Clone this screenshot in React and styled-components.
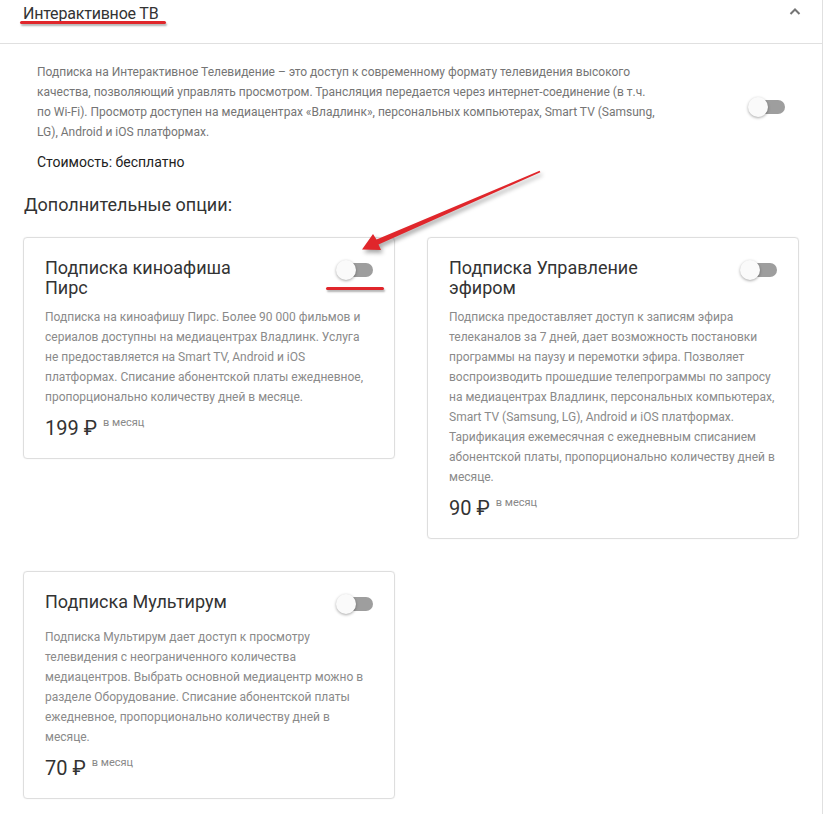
import React from "react";
import styled, { createGlobalStyle } from "styled-components";

const GlobalStyle = createGlobalStyle`
  html, body { margin: 0; padding: 0; background: #fff; }
  body { font-family: Roboto, "Noto Sans", Arial, sans-serif; color: #333; }
  * { box-sizing: border-box; }
`;

const Page = styled.div`
  position: relative;
  width: 823px;
  min-height: 814px;
  border-right: 1px solid #e0e0e0;
`;

const Header = styled.div`
  height: 44px;
  display: flex;
  justify-content: space-between;
  align-items: flex-start;
  padding: 4px 21px 0 23px;
  border-bottom: 1px solid #e0e0e0;
`;

const HeaderTitle = styled.div`
  position: relative;
  font-size: 16px;
  line-height: 20px;
  color: #333;
  letter-spacing: -0.2px;
  &::after {
    content: "";
    position: absolute;
    left: -3px;
    right: -8px;
    top: 17px;
    height: 3px;
    border-radius: 2px;
    background: #e0262b;
    box-shadow: 1px 2px 2px rgba(0, 0, 0, 0.3);
  }
`;

const Chevron = styled.svg`
  margin-top: 3px;
  width: 12px;
  height: 8px;
`;

const Body = styled.div`
  padding: 18px 23px 20px;
`;

const ServiceRow = styled.div`
  display: flex;
  justify-content: space-between;
  align-items: flex-start;
  padding: 0 14px;
`;

const ServiceText = styled.div`
  width: 623px;
`;

const ServiceDesc = styled.p`
  margin: 0;
  font-size: 12px;
  line-height: 20px;
  color: #757575;
`;

const Cost = styled.div`
  margin-top: 10px;
  font-size: 14px;
  line-height: 20px;
  color: #222;
`;

const SwitchBox = styled.div`
  position: relative;
  flex: none;
  width: 37px;
  height: 20px;
  margin-top: ${(p) => p.$offset || 0}px;
  display: flex;
  align-items: center;
  justify-content: flex-end;
`;

const Track = styled.div`
  width: 31px;
  height: 14px;
  border-radius: 7px;
  background: #9e9e9e;
`;

const Thumb = styled.div`
  position: absolute;
  left: 0;
  top: 0;
  width: 20px;
  height: 20px;
  border-radius: 50%;
  background: #fafafa;
  box-shadow: 0 1px 3px rgba(0, 0, 0, 0.35);
`;

const Mark = styled.div`
  position: absolute;
  left: -10px;
  right: -11px;
  top: 27px;
  height: 3px;
  border-radius: 2px;
  background: #e0262b;
  box-shadow: 1px 2px 2px rgba(0, 0, 0, 0.3);
`;

const Heading = styled.h2`
  margin: 21px 0 0 1px;
  font-size: 18px;
  line-height: 24px;
  font-weight: 400;
  color: #333;
`;

const Grid = styled.div`
  margin-top: 20px;
  display: grid;
  grid-template-columns: 372px 372px;
  gap: 32px;
  align-items: start;
`;

const Card = styled.div`
  border: 1px solid #dedede;
  border-radius: 4px;
  box-shadow: 0 0 1px rgba(0, 0, 0, 0.12);
  padding: 20px 21px 18px;
`;

const CardHead = styled.div`
  display: flex;
  justify-content: space-between;
  align-items: flex-start;
  min-height: 26px;
`;

const CardTitle = styled.h3`
  margin: 0;
  max-width: 215px;
  font-size: 18px;
  line-height: 20px;
  font-weight: 400;
  color: #333;
`;

const CardDesc = styled.p`
  margin: 9px 0 0;
  font-size: 12px;
  line-height: 20px;
  color: #8a8a8a;
`;

const Price = styled.div`
  margin-top: 9px;
  display: flex;
  align-items: flex-start;
`;

const Amount = styled.span`
  font-size: 20px;
  line-height: 24px;
  color: #333;
`;

const Per = styled.span`
  margin-left: 6px;
  font-size: 11px;
  line-height: 13px;
  color: #888;
`;

const Overlay = styled.svg`
  position: absolute;
  left: 0;
  top: 0;
  pointer-events: none;
  filter: drop-shadow(2px 3px 2px rgba(0, 0, 0, 0.35));
`;

function Switch({ offset, marked }) {
  return (
    <SwitchBox $offset={offset}>
      <Track />
      <Thumb />
      {marked && <Mark />}
    </SwitchBox>
  );
}

const options = [
  {
    title: "Подписка киноафиша Пирс",
    desc:
      "Подписка на киноафишу Пирс. Более 90 000 фильмов и сериалов доступны на медиацентрах Владлинк. Услуга не предоставляется на Smart TV, Android и iOS платформах. Списание абонентской платы ежедневное, пропорционально количеству дней в месяце.",
    price: "199 ₽",
    marked: true,
  },
  {
    title: "Подписка Управление эфиром",
    desc:
      "Подписка предоставляет доступ к записям эфира телеканалов за 7 дней, дает возможность постановки программы на паузу и перемотки эфира. Позволяет воспроизводить прошедшие телепрограммы по запросу на медиацентрах Владлинк, персональных компьютерах, Smart TV (Samsung, LG), Android и iOS платформах. Тарификация ежемесячная с ежедневным списанием абонентской платы, пропорционально количеству дней в месяце.",
    price: "90 ₽",
  },
  {
    title: "Подписка Мультирум",
    desc:
      "Подписка Мультирум дает доступ к просмотру телевидения с неограниченного количества медиацентров. Выбрать основной медиацентр можно в разделе Оборудование. Списание абонентской платы ежедневное, пропорционально количеству дней в месяце.",
    price: "70 ₽",
  },
];

export default function App() {
  return (
    <>
      <GlobalStyle />
      <Page>
        <Header>
          <HeaderTitle>Интерактивное ТВ</HeaderTitle>
          <Chevron viewBox="0 0 12 8">
            <path d="M1.5 7 L6 2.5 L10.5 7" fill="none" stroke="#757575" strokeWidth="2" />
          </Chevron>
        </Header>
        <Body>
          <ServiceRow>
            <ServiceText>
              <ServiceDesc>
                Подписка на Интерактивное Телевидение – это доступ к современному формату
                телевидения высокого качества, позволяющий управлять просмотром. Трансляция
                передается через интернет-соединение (в т.ч. по Wi-Fi). Просмотр доступен на
                медиацентрах «Владлинк», персональных компьютерах, Smart TV (Samsung, LG),
                Android и iOS платформах.
              </ServiceDesc>
              <Cost>Стоимость: бесплатно</Cost>
            </ServiceText>
            <Switch offset={35} />
          </ServiceRow>
          <Heading>Дополнительные опции:</Heading>
          <Grid>
            {options.map((o) => (
              <Card key={o.title}>
                <CardHead>
                  <CardTitle>{o.title}</CardTitle>
                  <Switch offset={2} marked={o.marked} />
                </CardHead>
                <CardDesc>{o.desc}</CardDesc>
                <Price>
                  <Amount>{o.price}</Amount>
                  <Per>в месяц</Per>
                </Price>
              </Card>
            ))}
          </Grid>
        </Body>
        <Overlay width="825" height="814" viewBox="0 0 825 814">
          <polygon
            points="539.6,170.8 376.5,239.6 373,234 362,249.5 381,250 378.5,244.4 540.4,172.2"
            fill="#e0262b"
          />
        </Overlay>
      </Page>
    </>
  );
}
